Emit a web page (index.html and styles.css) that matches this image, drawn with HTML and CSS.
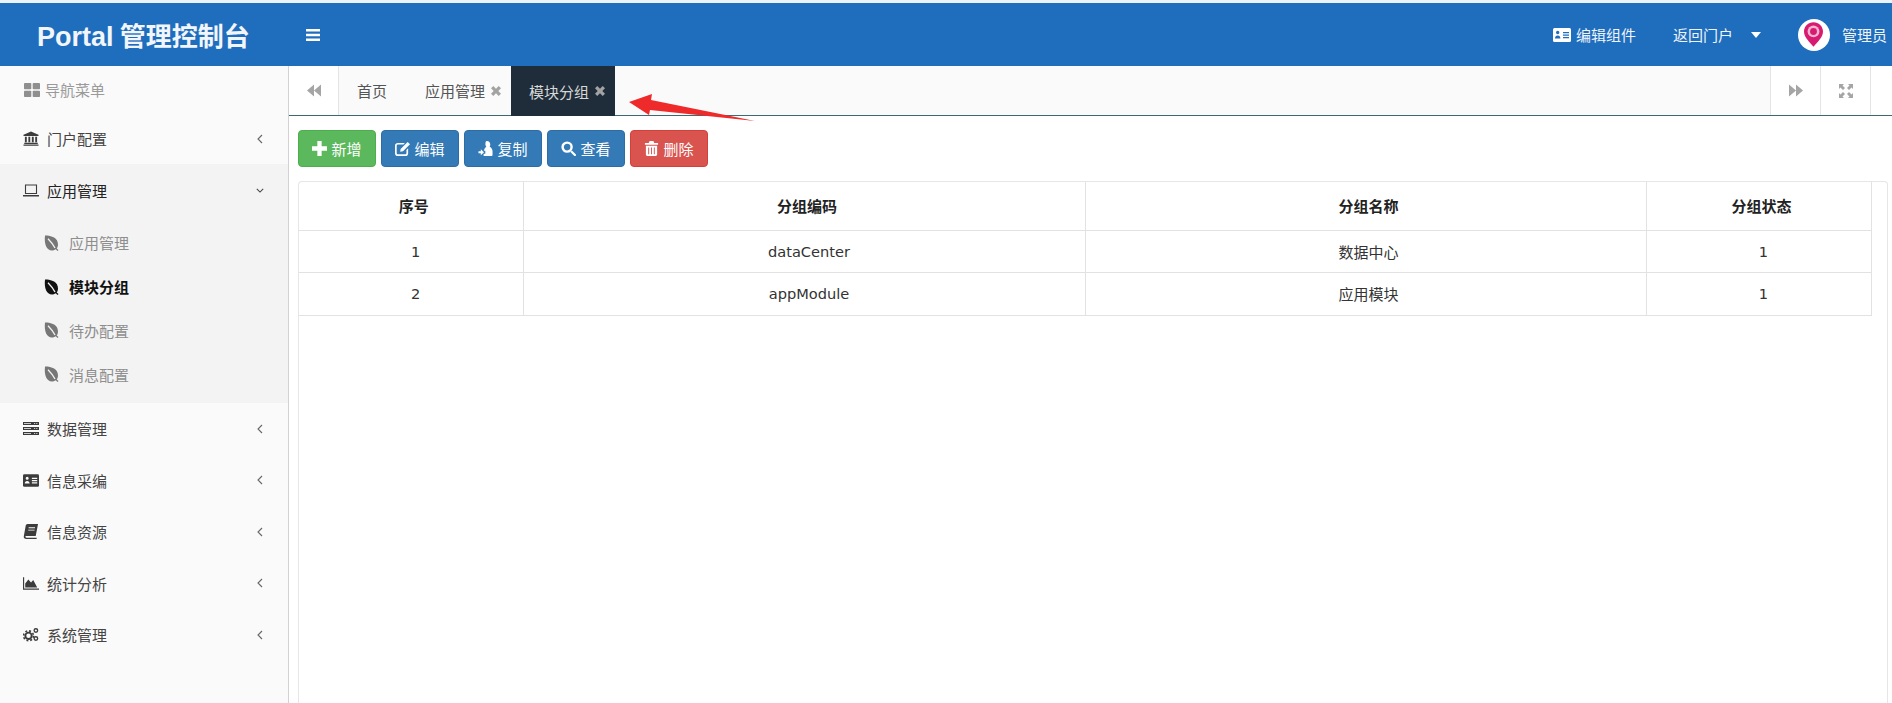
FILE: index.html
```html
<!DOCTYPE html>
<html lang="zh-CN">
<head>
<meta charset="utf-8">
<title>Portal 管理控制台</title>
<link rel="stylesheet" href="styles.css">
</head>
<body>
<svg class="defs" width="0" height="0" aria-hidden="true">
  <symbol id="i-grid" viewBox="0 0 16 14"><rect x="0" y="0" width="7.3" height="6.3" rx=".8"/><rect x="8.7" y="0" width="7.3" height="6.3" rx=".8"/><rect x="0" y="7.7" width="7.3" height="6.3" rx=".8"/><rect x="8.7" y="7.7" width="7.3" height="6.3" rx=".8"/></symbol>
  <symbol id="i-bank" viewBox="0 0 16 16"><path d="M8 .5 16 4v1.2H0V4z"/><path d="M1.5 6h2v6h-2zM5.2 6h2v6h-2zM8.9 6h2v6h-2zM12.5 6h2v6h-2zM.8 12.6h14.4v1.2H.8zM0 14.3h16v1.4H0z"/></symbol>
  <symbol id="i-laptop" viewBox="0 0 16 14"><path d="M2.500 1.500h11v8.500h-11z" fill="none" stroke="currentColor" stroke-width="1.100"/><path d="M0 11.500h16V13H0z"/></symbol>
  <symbol id="i-leaf" viewBox="1 0 15 16"><path d="M2 .5C9 .5 15 3 15 9.500c0 1.500-.5 3-1.300 4l1.800 1.500-1 .9-1.700-1.600C11.500 15.300 10 15.500 9 15.500 3.500 15.500 1 9 2 .5z"/><path d="M5 3.800c2.500 2.500 4.800 5.200 7 9.200" fill="none" stroke="#f3f3f3" stroke-width="1.300"/></symbol>
  <symbol id="i-server" viewBox="0 0 16 14"><path d="M0 .5h16v3H0zM0 5.500h16v3H0zM0 10.500h16v3H0z"/><path d="M1 1.500h7v1H1zM1 6.500h7v1H1zM1 11.500h7v1H1zM11 1.500h1.200v1H11zM13.200 1.500h1.200v1h-1.200zM11 6.500h1.200v1H11zM13.200 6.500h1.200v1h-1.200zM11 11.500h1.200v1H11zM13.200 11.500h1.200v1h-1.200z" fill="#fafafa" opacity=".75"/></symbol>
  <symbol id="i-card" viewBox="0 0 18 14"><rect x="0" y="0" width="18" height="14" rx="1.500"/><path d="M3 4.500a1.700 1.700 0 1 1 3.400 0 1.700 1.700 0 0 1-3.400 0zM2 10.500c0-2 1-3 2.700-3s2.700 1 2.700 3zM10 4h6v1.300h-6zM10 6.500h6v1.300h-6zM10 9h6v1.300h-6z" fill="var(--cut, #fafafa)"/></symbol>
  <symbol id="i-book" viewBox="0 0 16 16"><path d="M4.500 0H15.500L13 12.800H3.200C2.300 12.800 2 13.200 2 13.700s.4.900 1.200.9H14v1.400H3C1.200 16 0 15 .3 13.100L2.300 2C2.500.8 3.300 0 4.500 0z"/><path d="M5.500 3.500h6.800v1H5.500zM5 6h6.800v1H5z" fill="#fafafa"/></symbol>
  <symbol id="i-area" viewBox="0 0 18 14"><path d="M0 0h1.300v12.500H18V14H0z"/><path d="M2.500 11.500V7L6 2.500 9 6l2.500-3 4.500 8.500z"/></symbol>
  <symbol id="i-cogs" viewBox="0 0 18 16"><circle cx="6.200" cy="9.500" r="3.600" fill="none" stroke="currentColor" stroke-width="2.200"/><circle cx="6.200" cy="9.500" r="5.600" fill="none" stroke="currentColor" stroke-width="1.800" stroke-dasharray="2.200 2.200"/><circle cx="14.500" cy="3.500" r="2" fill="none" stroke="currentColor" stroke-width="1.500"/><circle cx="14.500" cy="12.500" r="2" fill="none" stroke="currentColor" stroke-width="1.500"/></symbol>
  <symbol id="i-plus" viewBox="0 0 14 14"><path d="M5 0h4v5h5v4H9v5H5V9H0V5h5z"/></symbol>
  <symbol id="i-edit" viewBox="0 0 16 16"><path d="M3 2h7.500L9 3.700H3.200c-.8 0-1.400.6-1.400 1.400v7.700c0 .8.600 1.400 1.400 1.400h7.600c.8 0 1.400-.6 1.400-1.400V9.500L14 7.700v5.500c0 1.600-1.200 2.800-2.800 2.800H3c-1.600 0-3-1.200-3-2.800V4.800C0 3.200 1.400 2 3 2z"/><path d="M13.500 1 16 3.500 8.500 11 5.500 11.500 6 8.500z"/></symbol>
  <symbol id="i-copy" viewBox="0 0 16 16"><path d="M9.500 0c2.300 0 3.600 1.700 3.600 3.800 0 .8-.2 1.500-.6 2.200C14.400 7 15.500 8.700 15.500 11v4c0 .6-.4 1-1 1H6v-2.500h1.800V10.300H6.200c.5-1.800 1.400-3.300 2.700-4.100C8.300 5.500 7.900 4.700 7.900 3.800 7.900 1.700 8 0 9.500 0z"/><path d="M.5 11H3V8.800L6.400 12 3 15.200V13H.5z"/></symbol>
  <symbol id="i-search" viewBox="0 0 16 16"><circle cx="6.500" cy="6.500" r="4.800" fill="none" stroke="currentColor" stroke-width="2.600"/><path d="m10 11.700 1.700-1.700 4 4a1.200 1.200 0 0 1-1.700 1.700z"/></symbol>
  <symbol id="i-trash" viewBox="0 0 14 16"><path d="M5 0h4l1 2h4v2H0V2h4z"/><path d="M1 5h12v9.500c0 .8-.7 1.500-1.500 1.500h-9C1.700 16 1 15.300 1 14.500zM3.500 7v7h1V7zM6.500 7v7h1V7zM9.500 7v7h1V7z" fill-rule="evenodd"/></symbol>
  <symbol id="i-bars" viewBox="0 0 14 12"><path d="M0 0h14v2.600H0zM0 4.700h14v2.600H0zM0 9.400h14V12H0z"/></symbol>
  <symbol id="i-back" viewBox="0 0 14 12"><path d="M7 0v12L0 6zM14 0v12L7 6z"/></symbol>
  <symbol id="i-fwd" viewBox="0 0 14 12"><path d="M0 0v12l7-6zM7 0v12l7-6z"/></symbol>
  <symbol id="i-expand" viewBox="0 0 14 14"><path d="M0 0h5L3.500 1.500 6 4 4 6 1.500 3.500 0 5zM14 0v5l-1.500-1.500L10 6 8 4l2.500-2.500L9 0zM0 14V9l1.500 1.500L4 8l2 2-2.500 2.500L5 14zM14 14H9l1.500-1.500L8 10l2-2 2.500 2.500L14 9z"/></symbol>
  <symbol id="i-times" viewBox="0 0 10 10"><path d="M2.300 0 5 2.700 7.700 0 10 2.300 7.300 5 10 7.700 7.700 10 5 7.300 2.300 10 0 7.700 2.700 5 0 2.300z"/></symbol>
  <symbol id="i-left" viewBox="0 0 6 10"><path d="M5 1 1 5l4 4" fill="none" stroke="currentColor" stroke-width="1.100"/></symbol>
  <symbol id="i-down" viewBox="0 0 10 6"><path d="M1 1l4 4 4-4" fill="none" stroke="currentColor" stroke-width="1.300"/></symbol>
</svg>

<div class="page">
  <header class="topbar">
    <div class="logo"><span class="logo-en">Portal</span> 管理控制台</div>
    <svg class="bars"><use href="#i-bars"/></svg>
    <div class="top-right">
      <span class="top-link"><svg class="ic-card"><use href="#i-card"/></svg>编辑组件</span>
      <span class="top-link back">返回门户<span class="caret"></span></span>
      <span class="avatar">
        <svg viewBox="0 0 20 26" class="pin"><path d="M10 0C4.500 0 0 4.300 0 9.800 0 16 6 21 10 26c4-5 10-10 10-16.200C20 4.300 15.500 0 10 0z" fill="#d81b72"/><circle cx="10" cy="9.800" r="6.200" fill="#f7b6cf"/><circle cx="10" cy="9.800" r="3.600" fill="#d81b72"/></svg>
      </span>
      <span class="user">管理员</span>
    </div>
  </header>

  <div class="body-row">
    <aside class="sidebar">
      <div class="nav-title"><svg class="ic"><use href="#i-grid"/></svg>导航菜单</div>
      <ul class="menu">
        <li class="item item-first"><svg class="ic"><use href="#i-bank"/></svg><span class="label">门户配置</span><svg class="chev"><use href="#i-left"/></svg></li>
        <li class="section">
          <div class="item item-open"><svg class="ic"><use href="#i-laptop"/></svg><span class="label">应用管理</span><svg class="chev-down"><use href="#i-down"/></svg></div>
          <ul class="submenu">
            <li class="sub"><svg class="ic-leaf"><use href="#i-leaf"/></svg>应用管理</li>
            <li class="sub sub-active"><svg class="ic-leaf"><use href="#i-leaf"/></svg>模块分组</li>
            <li class="sub"><svg class="ic-leaf"><use href="#i-leaf"/></svg>待办配置</li>
            <li class="sub"><svg class="ic-leaf"><use href="#i-leaf"/></svg>消息配置</li>
          </ul>
        </li>
        <li class="item"><svg class="ic"><use href="#i-server"/></svg><span class="label">数据管理</span><svg class="chev"><use href="#i-left"/></svg></li>
        <li class="item"><svg class="ic"><use href="#i-card"/></svg><span class="label">信息采编</span><svg class="chev"><use href="#i-left"/></svg></li>
        <li class="item"><svg class="ic"><use href="#i-book"/></svg><span class="label">信息资源</span><svg class="chev"><use href="#i-left"/></svg></li>
        <li class="item"><svg class="ic"><use href="#i-area"/></svg><span class="label">统计分析</span><svg class="chev"><use href="#i-left"/></svg></li>
        <li class="item"><svg class="ic"><use href="#i-cogs"/></svg><span class="label">系统管理</span><svg class="chev"><use href="#i-left"/></svg></li>
      </ul>
    </aside>

    <main class="main">
      <div class="tabbar">
        <span class="tab-btn tab-btn-left"><svg class="ic-nav"><use href="#i-back"/></svg></span>
        <span class="tab tab-home">首页</span>
        <span class="tab tab-app">应用管理<svg class="ic-x"><use href="#i-times"/></svg></span>
        <span class="tab tab-active">模块分组<svg class="ic-x"><use href="#i-times"/></svg></span>
        <span class="tab-spacer"></span>
        <span class="tab-btn tab-btn-right"><svg class="ic-nav"><use href="#i-fwd"/></svg></span>
        <span class="tab-btn tab-btn-right"><svg class="ic-nav ic-expand"><use href="#i-expand"/></svg></span>
        <span class="tab-end"></span>
      </div>

      <div class="toolbar">
        <button class="btn btn-green"><svg class="ic-btn"><use href="#i-plus"/></svg>新增</button>
        <button class="btn btn-blue"><svg class="ic-btn"><use href="#i-edit"/></svg>编辑</button>
        <button class="btn btn-blue"><svg class="ic-btn"><use href="#i-copy"/></svg>复制</button>
        <button class="btn btn-blue"><svg class="ic-btn"><use href="#i-search"/></svg>查看</button>
        <button class="btn btn-red"><svg class="ic-btn"><use href="#i-trash"/></svg>删除</button>
      </div>

      <div class="panel">
        <table class="grid">
          <colgroup><col class="c1"><col class="c2"><col class="c3"><col class="c4"></colgroup>
          <thead>
            <tr><th>序号</th><th>分组编码</th><th>分组名称</th><th>分组状态</th></tr>
          </thead>
          <tbody>
            <tr><td class="latin">1</td><td class="latin">dataCenter</td><td>数据中心</td><td class="latin">1</td></tr>
            <tr class="row-tall"><td class="latin">2</td><td class="latin">appModule</td><td>应用模块</td><td class="latin">1</td></tr>
          </tbody>
        </table>
      </div>

      <svg class="arrow" viewBox="0 0 130 30" width="130" height="30"><path d="M0 9 23 1 22 7 126 28 21 17 20 22z" fill="#ee2a2a"/></svg>
    </main>
  </div>
</div>
</body>
</html>
```

FILE: styles.css
```css
* { box-sizing: border-box; }
html, body { margin: 0; height: 100%; }
body {
  background: #eaf3f8;
  font-family: "Liberation Sans", "Noto Sans CJK SC", sans-serif;
  font-size: 15px;
  color: #333;
  overflow: hidden;
}
ul { list-style: none; margin: 0; padding: 0; }
.defs { position: absolute; }
svg { fill: currentColor; flex: none; }

.page { display: flex; flex-direction: column; height: 703px; padding-top: 3px; }

/* top bar */
.topbar {
  height: 63px;
  background: #1f6dbd;
  color: #fff;
  display: flex;
  align-items: center;
  flex: none;
}
.logo {
  width: 306px;
  padding-left: 37px;
  font-size: 26px;
  font-weight: 700;
  color: #f2f6fa;
  white-space: nowrap;
  word-spacing: -1px;
}
.logo-en { font-size: 27px; }
.bars { width: 14px; height: 12px; }
.top-right { margin-left: auto; display: flex; align-items: center; padding-right: 5px; color: #eef4fa; }
.top-link { display: flex; align-items: center; }
.ic-card { width: 18px; height: 14px; margin-right: 5px; --cut: #1f6dbd; color: #fff; }
.back { margin-left: 37px; }
.caret {
  width: 0; height: 0;
  margin-left: 18px;
  border-left: 5px solid transparent;
  border-right: 5px solid transparent;
  border-top: 6px solid #fff;
}
.avatar {
  width: 32px; height: 32px;
  margin-left: 37px;
  border-radius: 50%;
  background: #fff;
  display: flex;
  align-items: center;
  justify-content: center;
}
.pin { width: 19px; height: 25px; }
.user { margin-left: 12px; }

/* layout */
.body-row { flex: 1; display: flex; min-height: 0; background: #fff; position: relative; }

/* sidebar */
.sidebar { width: 289px; flex: none; background: #fafafa; border-right: 1px solid #d2d2d2; }
.nav-title {
  height: 47px;
  display: flex;
  align-items: center;
  padding-left: 24px;
  color: #9a9a9a;
}
.nav-title .ic { width: 16px; height: 14px; margin-right: 5px; color: #8f8f8f; }
.item {
  height: 51.5px;
  display: flex;
  align-items: center;
  padding-left: 23px;
  color: #444;
}
.item-first { height: 51px; }
.item-open { height: 52px; color: #222; }
.item .ic { width: 16px; height: 15px; margin-right: 8px; color: #3c3c3c; --cut: #fafafa; }
.label { flex: 1; }
.chev { width: 6px; height: 10px; margin-right: 25px; color: #666; }
.chev-down { width: 8px; height: 5px; margin-right: 24px; color: #444; }
.section { background: #f3f3f3; }
.submenu { padding: 5px 0 7px; }
.sub {
  height: 43.75px;
  display: flex;
  align-items: center;
  padding-left: 44px;
  color: #8e8e8e;
}
.sub-active { color: #111; font-weight: 700; }
.ic-leaf { width: 15px; height: 16px; margin-right: 10px; color: #777; }
.sub-active .ic-leaf { color: #111; }

/* main */
.main { flex: 1; min-width: 0; display: flex; flex-direction: column; position: relative; }
.tabbar {
  height: 50px;
  flex: none;
  display: flex;
  align-items: stretch;
  background: #fafafa;
  border-bottom: 1px solid #3d6a70;
  color: #555;
}
.tab-btn {
  width: 50px;
  display: flex;
  align-items: center;
  justify-content: center;
  background: #fff;
  color: #a5a5a5;
}
.tab-btn-left { border-right: 1px solid #e4e4e4; }
.tab-btn-right { border-left: 1px solid #e4e4e4; }
.ic-nav { width: 14px; height: 13px; }
.ic-expand { height: 14px; }
.tab { display: flex; align-items: center; white-space: nowrap; }
.tab-home { padding: 0 18px; }
.tab-app { padding: 0 10px 0 20px; }
.tab-active {
  background: #1f2d3a;
  color: #d8d8d8;
  padding: 0 10px 0 18px;
  margin-bottom: -1px;
}
.ic-x { width: 10px; height: 10px; margin-left: 6px; color: #a3a3a3; }
.tab-spacer { flex: 1; }
.tab-end { width: 22px; border-left: 1px solid #e4e4e4; background: #fff; }

.toolbar { display: flex; gap: 5px; padding: 14px 0 0 9px; flex: none; }
.btn {
  width: 78px;
  height: 37px;
  border: 1px solid transparent;
  border-radius: 4px;
  color: #fff;
  font: inherit;
  display: flex;
  align-items: center;
  justify-content: center;
  padding: 0;
}
.btn-green { background: #5cb85c; border-color: #4cae4c; }
.btn-blue { background: #337ab7; border-color: #2e6da4; }
.btn-red { background: #d9534f; border-color: #d43f3a; }
.ic-btn { width: 15px; height: 15px; margin-right: 4px; }

.panel {
  flex: 1;
  margin: 14px 4px 0 9px;
  border: 1px solid #e6e6e6;
  border-bottom: 0;
  border-radius: 4px 4px 0 0;
  background: #fff;
  min-height: 0;
}
.grid { border-collapse: collapse; table-layout: fixed; width: 1572px; }
.c1 { width: 224px; }
.c2 { width: 562px; }
.c3 { width: 561px; }
.c4 { width: 225px; }
.grid th, .grid td {
  border: 1px solid #e2e2e2;
  text-align: center;
  padding: 0 0 0 6px;
}
.grid tr:first-child th { border-top: 0; }
.grid th:first-child, .grid td:first-child { border-left: 0; }
.grid th { height: 48px; font-weight: 700; color: #222; }
.grid td { height: 42px; color: #333; }
.grid .row-tall td { height: 43px; }
.grid .latin { font-family: "DejaVu Sans", sans-serif; font-size: 14.6px; padding-left: 10px; }

.arrow { position: absolute; left: 340px; top: 27px; }
```
